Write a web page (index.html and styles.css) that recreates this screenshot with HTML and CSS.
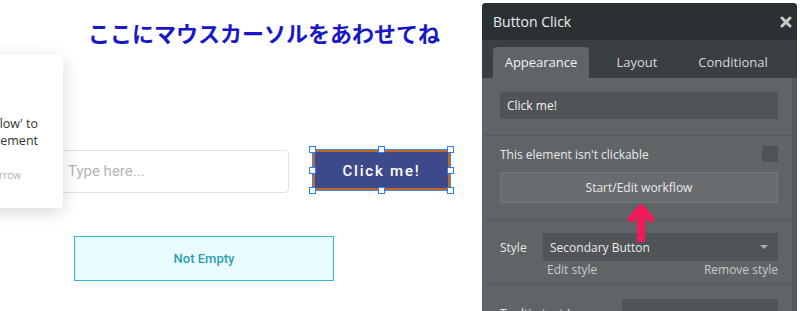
FILE: index.html
```html
<!DOCTYPE html>
<html lang="ja">
<head>
    <meta charset="UTF-8">
    <meta name="viewport" content="width=device-width, initial-scale=1.0">
    <title>Button Click</title>
    <link rel="stylesheet" href="styles.css">
</head>
<body>
    <div class="canvas">
        <h1 class="hint">ここにマウスカーソルをあわせてね</h1>

        <div class="text-input">Type here...</div>

        <div class="btn-selected">
            <div class="btn-main">Click me!</div>
            <span class="handle h-tl"></span>
            <span class="handle h-tc"></span>
            <span class="handle h-tr"></span>
            <span class="handle h-ml"></span>
            <span class="handle h-mr"></span>
            <span class="handle h-bl"></span>
            <span class="handle h-bc"></span>
            <span class="handle h-br"></span>
        </div>

        <div class="not-empty">Not Empty</div>

        <div class="tip-card">
            <p class="tip-text">Click 'Start/Edit workflow' to<br>add an action to this element</p>
            <p class="tip-foot">Next step: follow the arrow</p>
        </div>
    </div>

    <div class="panel">
        <div class="panel-head">
            <span>Button Click</span>
            <svg class="close" width="12" height="12" viewBox="0 0 12 12">
                <path d="M2 2 L10 10 M10 2 L2 10" stroke="#c9cccd" stroke-width="3" stroke-linecap="round"/>
            </svg>
        </div>
        <div class="tabs">
            <div class="tab active">Appearance</div>
            <div class="tab">Layout</div>
            <div class="tab">Conditional</div>
        </div>
        <div class="panel-body">
            <div class="section s-text">
                <div class="field">Click me!</div>
            </div>
            <div class="section s-click">
                <div class="check-row">
                    <span>This element isn't clickable</span>
                    <span class="checkbox"></span>
                </div>
                <div class="wf-btn">Start/Edit workflow</div>
                <svg class="arrow" width="26" height="38" viewBox="0 0 26 38">
                    <path d="M13 36 L13 10" stroke="#f41a5a" stroke-width="8" stroke-linecap="round"/>
                    <path d="M3 15 L13 4 L23 15" fill="none" stroke="#f41a5a" stroke-width="7" stroke-linecap="round" stroke-linejoin="round"/>
                </svg>
            </div>
            <div class="section s-style">
                <div class="style-row">
                    <span class="label">Style</span>
                    <div class="select">
                        <span>Secondary Button</span>
                        <span class="caret"></span>
                    </div>
                </div>
                <div class="style-links">
                    <span>Edit style</span>
                    <span>Remove style</span>
                </div>
            </div>
            <div class="section s-tooltip">
                <div class="tooltip-row">
                    <span class="label">Tooltip text (on hover)</span>
                    <div class="field short"></div>
                </div>
            </div>
        </div>
    </div>
</body>
</html>
```

FILE: styles.css
```css
body {
    margin: 0;
    width: 800px;
    height: 311px;
    overflow: hidden;
    display: flex;
    background: #fff;
    font-family: "Open Sans", sans-serif;
}

/* editor canvas, elements sit at their own coordinates */
.canvas {
    position: relative;
    width: 482px;
    height: 311px;
    flex-shrink: 0;
    overflow: hidden;
}
.hint {
    position: absolute;
    left: 88px;
    top: 16px;
    margin: 0;
    font-family: "Noto Sans CJK JP", sans-serif;
    font-size: 22px;
    font-weight: 700;
    color: #1717c9;
    white-space: nowrap;
}
.text-input {
    position: absolute;
    left: 40px;
    top: 150px;
    width: 249px;
    height: 43px;
    box-sizing: border-box;
    border: 1px solid #e2e2e2;
    border-radius: 4px;
    padding-left: 27px;
    font-family: Roboto, sans-serif;
    font-size: 15px;
    line-height: 41px;
    color: #b5b5b5;
}
.btn-selected {
    position: absolute;
    left: 312px;
    top: 149px;
    width: 139px;
    height: 42px;
    box-sizing: border-box;
    border: 1px solid #3d8bf0;
}
.btn-main {
    height: 100%;
    background: #3c4a8c;
    border: 2px solid #c2681f;
    box-sizing: border-box;
    color: #fff;
    font-family: Roboto, sans-serif;
    font-size: 15px;
    font-weight: 500;
    letter-spacing: 1.8px;
    text-align: center;
    line-height: 38px;
}
.handle {
    position: absolute;
    width: 5px;
    height: 5px;
    background: #fff;
    border: 1px solid #2a7cf0;
}
.h-tl { left: -4px; top: -4px; }
.h-tc { left: 65px; top: -4px; }
.h-tr { right: -4px; top: -4px; }
.h-ml { left: -4px; top: 17px; }
.h-mr { right: -4px; top: 17px; }
.h-bl { left: -4px; bottom: -4px; }
.h-bc { left: 65px; bottom: -4px; }
.h-br { right: -4px; bottom: -4px; }

.not-empty {
    position: absolute;
    left: 74px;
    top: 236px;
    width: 260px;
    height: 45px;
    box-sizing: border-box;
    background: #e9fbfd;
    border: 1px solid #2bbccd;
    color: #2a9fb3;
    font-family: Roboto, sans-serif;
    font-size: 13px;
    font-weight: 500;
    text-align: center;
    line-height: 43px;
}
.tip-card {
    position: absolute;
    left: -150px;
    top: 55px;
    width: 213px;
    height: 153px;
    box-sizing: border-box;
    padding: 60px 0 0 0;
    background: #fff;
    border-radius: 4px;
    box-shadow: 0 4px 18px rgba(0, 0, 0, 0.16);
}
.tip-text {
    margin: 0;
    font-size: 12.5px;
    line-height: 17px;
    color: #333;
    text-align: right;
    padding-right: 25px;
    white-space: nowrap;
}
.tip-foot {
    margin: 19px 0 0;
    font-size: 10px;
    color: #b0b0b0;
    text-align: right;
    padding-right: 42px;
    white-space: nowrap;
}

/* property editor */
.panel {
    width: 315px;
    margin-top: 3px;
    background: #5f6467;
    border-radius: 4px 4px 0 0;
    overflow: hidden;
    color: #e9eaea;
    font-size: 12px;
}
.panel-head {
    height: 37px;
    background: #2b3033;
    display: flex;
    align-items: center;
    justify-content: space-between;
    padding: 0 5px 0 11px;
    font-size: 14px;
    color: #eef0f0;
}
.close {
    margin-top: 1px;
}
.tabs {
    height: 38px;
    background: #3a3f42;
    display: flex;
    align-items: flex-end;
    padding-left: 11px;
    box-sizing: border-box;
}
.tab {
    height: 31px;
    width: 96px;
    text-align: center;
    line-height: 31px;
    font-size: 13px;
    color: #d8dadb;
    border-radius: 4px 4px 0 0;
}
.tab.active {
    background: #5f6467;
    color: #f2f3f3;
}
.panel-body {
    border-right: 5px solid #55595c;
    height: 236px;
}
.section {
    padding: 14px 14px 16px 18px;
    border-bottom: 1px solid #575b5e;
}
.field {
    height: 27px;
    background: #505457;
    line-height: 27px;
    padding-left: 7px;
    color: #f0f0f0;
}
.s-click {
    position: relative;
    padding-top: 10px;
    padding-bottom: 17px;
}
.check-row {
    display: flex;
    justify-content: space-between;
    align-items: center;
    height: 16px;
}
.checkbox {
    width: 16px;
    height: 16px;
    background: #4f5356;
}
.wf-btn {
    margin-top: 10px;
    height: 31px;
    box-sizing: border-box;
    border: 1px solid #76797c;
    background: #686c6f;
    text-align: center;
    line-height: 29px;
}
.arrow {
    position: absolute;
    left: 146px;
    top: 68px;
}
.s-style {
    padding-top: 12px;
    padding-bottom: 6px;
}
.style-row {
    display: flex;
    align-items: center;
}
.label {
    width: 43px;
    flex-shrink: 0;
}
.select {
    flex: 1;
    height: 28px;
    background: #505457;
    display: flex;
    align-items: center;
    justify-content: space-between;
    padding: 0 10px 0 7px;
}
.caret {
    width: 0;
    height: 0;
    border-left: 4px solid transparent;
    border-right: 4px solid transparent;
    border-top: 4px solid #a9acae;
}
.style-links {
    display: flex;
    justify-content: space-between;
    padding-left: 47px;
    height: 17px;
    line-height: 17px;
    color: #c8cacb;
}
.s-tooltip {
    border-bottom: none;
}
.tooltip-row {
    display: flex;
    align-items: flex-start;
}
.tooltip-row .label {
    width: 122px;
    padding-top: 6px;
    line-height: 18px;
}
.field.short {
    flex: 1;
}
```
